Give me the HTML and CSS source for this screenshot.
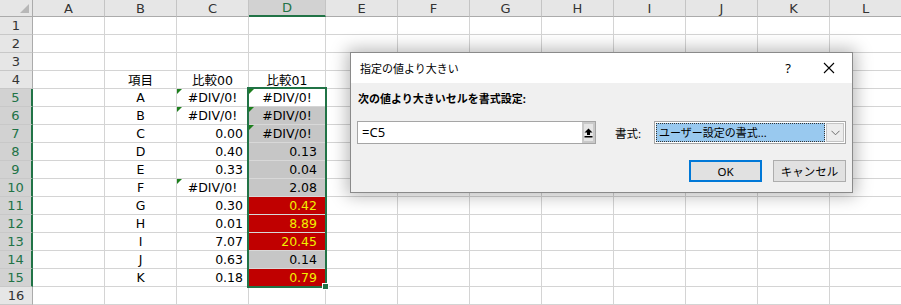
FILE: index.html
```html
<!DOCTYPE html>
<html>
<head>
  <meta charset="utf-8">
  <title>指定の値より大きい</title>
  <link rel="stylesheet" href="styles.css">
</head>
<body>
<main class="sheet">

  <div class="row head">
    <div class="corner"></div>
    <div class="ch">A</div><div class="ch">B</div><div class="ch">C</div><div class="ch sel">D</div>
    <div class="ch">E</div><div class="ch">F</div><div class="ch">G</div><div class="ch">H</div>
    <div class="ch">I</div><div class="ch">J</div><div class="ch">K</div><div class="ch">L</div>
  </div>

  <div class="row"><div class="rh">1</div><div class="c"></div><div class="c"></div><div class="c"></div><div class="c"></div><div class="rest"></div></div>
  <div class="row"><div class="rh">2</div><div class="c"></div><div class="c"></div><div class="c"></div><div class="c"></div><div class="rest"></div></div>
  <div class="row"><div class="rh">3</div><div class="c"></div><div class="c"></div><div class="c"></div><div class="c"></div><div class="rest"></div></div>
  <div class="row"><div class="rh">4</div><div class="c"></div><div class="c mid">項目</div><div class="c mid">比較00</div><div class="c mid">比較01</div><div class="rest"></div></div>

  <div class="row"><div class="rh on">5</div><div class="c"></div><div class="c mid">A</div><div class="c mid err">#DIV/0!</div><div class="c d mid err">#DIV/0!</div><div class="rest"></div></div>
  <div class="row"><div class="rh on">6</div><div class="c"></div><div class="c mid">B</div><div class="c mid err">#DIV/0!</div><div class="c d grey mid err">#DIV/0!</div><div class="rest"></div></div>
  <div class="row"><div class="rh on">7</div><div class="c"></div><div class="c mid">C</div><div class="c num">0.00</div><div class="c d grey mid err">#DIV/0!</div><div class="rest"></div></div>
  <div class="row"><div class="rh on">8</div><div class="c"></div><div class="c mid">D</div><div class="c num">0.40</div><div class="c d grey num">0.13</div><div class="rest"></div></div>
  <div class="row"><div class="rh on">9</div><div class="c"></div><div class="c mid">E</div><div class="c num">0.33</div><div class="c d grey num">0.04</div><div class="rest"></div></div>
  <div class="row"><div class="rh on">10</div><div class="c"></div><div class="c mid">F</div><div class="c mid err">#DIV/0!</div><div class="c d grey num">2.08</div><div class="rest"></div></div>
  <div class="row"><div class="rh on">11</div><div class="c"></div><div class="c mid">G</div><div class="c num">0.30</div><div class="c d red num">0.42</div><div class="rest"></div></div>
  <div class="row"><div class="rh on">12</div><div class="c"></div><div class="c mid">H</div><div class="c num">0.01</div><div class="c d red num">8.89</div><div class="rest"></div></div>
  <div class="row"><div class="rh on">13</div><div class="c"></div><div class="c mid">I</div><div class="c num">7.07</div><div class="c d red num">20.45</div><div class="rest"></div></div>
  <div class="row"><div class="rh on">14</div><div class="c"></div><div class="c mid">J</div><div class="c num">0.63</div><div class="c d grey num">0.14</div><div class="rest"></div></div>
  <div class="row"><div class="rh on">15</div><div class="c"></div><div class="c mid">K</div><div class="c num">0.18</div><div class="c d red num">0.79</div><div class="rest"></div></div>
  <div class="row"><div class="rh">16</div><div class="c"></div><div class="c"></div><div class="c"></div><div class="c"></div><div class="rest"></div></div>

  <!-- selected range D5:D15 -->
  <div class="selection"></div>
  <div class="handle"></div>

  <section class="dialog">
    <header class="title">
      <span class="title-text">指定の値より大きい</span>
      <span class="help">?</span>
      <svg class="close" width="12" height="12" viewBox="0 0 12 12">
        <path d="M1 1 L11 11 M11 1 L1 11" stroke="#000" stroke-width="1.1" fill="none"/>
      </svg>
    </header>

    <div class="body">
      <div class="label">次の値より大きいセルを書式設定:</div>

      <div class="fields">
        <div class="input">
          <span class="value">=C5</span>
          <span class="pick">
            <svg width="9" height="10" viewBox="0 0 9 10">
              <path d="M4.5 0.5 L8.5 4.5 L6 4.5 L6 7 L3 7 L3 4.5 L0.5 4.5 Z" fill="#000"/>
              <rect x="0.5" y="8" width="8" height="1.5" fill="#000"/>
            </svg>
          </span>
        </div>
        <span class="fmt-label">書式:</span>
        <div class="select">
          <span class="option">ユーザー設定の書式...</span>
          <span class="drop">
            <svg width="9" height="6" viewBox="0 0 9 6">
              <path d="M0.5 0.8 L4.5 4.8 L8.5 0.8" stroke="#6d6d6d" stroke-width="1" fill="none"/>
            </svg>
          </span>
        </div>
      </div>

      <div class="buttons">
        <button class="ok">OK</button>
        <button>キャンセル</button>
      </div>
    </div>
  </section>

</main>
</body>
</html>
```

FILE: styles.css
```css
* {
  box-sizing: border-box;
}

body {
  margin: 0;
  background-color: white;
  overflow: hidden;
  font-family: "DejaVu Sans", "Noto Sans CJK JP", sans-serif;
}

.sheet {
  position: relative;
  display: flex;
  flex-direction: column;
  width: 901px;
  height: 305px;
}

.row {
  display: grid;
  grid-template-columns: 33px 72px 72px 72px 77px 1fr;
  height: 18px;
  flex-shrink: 0;
}

.row.head {
  grid-template-columns: 33px 72px 72px 72px 77px repeat(8, 72px);
  height: 17px;
}

/* column headers */
.corner {
  position: relative;
  background-color: #e6e6e6;
  border-right: 1px solid #ababab;
  border-bottom: 1px solid #ababab;
}

.corner::after {
  content: "";
  position: absolute;
  right: 3px;
  bottom: 3px;
  width: 9px;
  height: 9px;
  background-color: #b7b7b7;
  clip-path: polygon(100% 0, 100% 100%, 0 100%);
}

.ch {
  display: flex;
  align-items: center;
  justify-content: center;
  background-color: #e6e6e6;
  border-right: 1px solid #c4c4c4;
  border-bottom: 1px solid #ababab;
  font-size: 13px;
  color: #333;
}

.ch.sel {
  background-color: #d2d2d2;
  color: #217346;
  border-bottom: 2px solid #217346;
}

/* row headers */
.rh {
  display: flex;
  align-items: center;
  justify-content: center;
  background-color: #e6e6e6;
  border-right: 1px solid #ababab;
  border-bottom: 1px solid #c8c8c8;
  font-size: 13px;
  color: #333;
}

.rh.on {
  background-color: #d2d2d2;
  color: #217346;
  border-right: 2px solid #217346;
}

/* cells */
.c {
  position: relative;
  display: flex;
  align-items: center;
  padding: 0 5px;
  border-right: 1px solid #d4d4d4;
  border-bottom: 1px solid #d4d4d4;
  font-size: 12.5px;
  white-space: nowrap;
  overflow: hidden;
}

.mid { justify-content: center; }
.num { justify-content: flex-end; }
.d.num { padding-right: 8px; }

.grey {
  background-color: #c6c6c6;
  border-bottom-color: #d8d8d8;
}

.red {
  background-color: #c00000;
  color: #f0f000;
  border-bottom-color: #d8d8d8;
}

.err::before {
  content: "";
  position: absolute;
  left: 0;
  top: 0;
  width: 5px;
  height: 5px;
  background-color: #1d7f1d;
  clip-path: polygon(0 0, 100% 0, 0 100%);
}

.rest {
  border-bottom: 1px solid #d4d4d4;
  background-image: repeating-linear-gradient(to right, transparent 0 71px, #d4d4d4 71px 72px);
}

.selection {
  position: absolute;
  left: 247px;
  top: 87px;
  width: 80px;
  height: 201px;
  border: 2px solid #217346;
}

.handle {
  position: absolute;
  left: 322px;
  top: 283px;
  width: 7px;
  height: 7px;
  background-color: #217346;
  border: 1px solid white;
}

/* dialog */
.dialog {
  position: absolute;
  left: 350px;
  top: 52px;
  width: 503px;
  height: 141px;
  display: flex;
  flex-direction: column;
  background-color: #f0f0f0;
  border: 1px solid #8a8a8a;
  box-shadow: 0px 0px 16px 3px rgba(0,0,0,0.28);
  font-family: "Noto Sans", "Noto Sans CJK JP", sans-serif;
  font-size: 11.5px;
  color: black;
}

.title {
  display: flex;
  align-items: center;
  height: 30px;
  padding-left: 9px;
  background-color: white;
}

.title-text {
  flex-grow: 1;
  font-size: 11px;
}

.help {
  font-size: 13px;
  margin-right: 32px;
}

.close {
  margin-right: 17px;
}

.body {
  display: flex;
  flex-direction: column;
  padding: 8px 6px 0 6px;
}

.label {
  font-weight: bold;
  font-size: 11px;
  height: 16px;
  line-height: 16px;
  padding-left: 1px;
}

.fields {
  display: flex;
  align-items: center;
  margin-top: 14px;
  height: 23px;
}

.input {
  display: flex;
  width: 239px;
  height: 23px;
  background-color: white;
  border: 1px solid #a5a5a5;
}

.value {
  flex-grow: 1;
  padding-left: 4px;
  font-size: 13px;
  line-height: 21px;
}

.pick {
  display: flex;
  align-items: center;
  justify-content: center;
  width: 13px;
  background-color: #e5e5e5;
  border: 2px solid #c9c9c9;
}

.fmt-label {
  margin-left: 19px;
  width: 39px;
  font-size: 11.5px;
}

.select {
  display: flex;
  width: 192px;
  height: 23px;
  padding: 1px;
  background-color: white;
  border: 1px solid #a5a5a5;
}

.option {
  flex-grow: 1;
  padding-left: 2px;
  background-color: #99c9ef;
  border: 1px dotted #333;
  font-size: 11px;
  line-height: 18px;
}

.drop {
  display: flex;
  align-items: center;
  justify-content: center;
  width: 18px;
  margin-left: 1px;
  background-color: #ececec;
  border: 1px solid #c4c4c4;
}

.buttons {
  display: flex;
  justify-content: flex-end;
  gap: 11px;
  margin-top: 16px;
}

button {
  width: 73px;
  height: 22px;
  padding: 0;
  background-color: #e1e1e1;
  border: 1px solid #adadad;
  font-family: "Noto Sans", "Noto Sans CJK JP", sans-serif;
  font-size: 11.5px;
  color: black;
}

button.ok {
  border: 2px solid #0078d7;
}
```
